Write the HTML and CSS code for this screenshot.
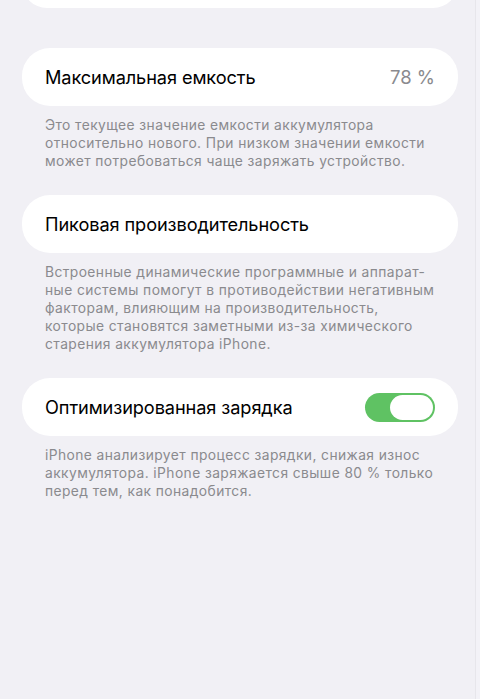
FILE: index.html
```html
<!DOCTYPE html>
<html lang="ru">
<head>
<meta charset="utf-8">
<link rel="stylesheet" href="styles.css">
</head>
<body>
<div class="screen">
  <main class="content">
    <div class="card card-cut"></div>

    <section class="group">
      <div class="card row">
        <span class="label">Максимальная емкость</span>
        <span class="value">78 %</span>
      </div>
      <p class="footer">Это текущее значение емкости аккумулятора относительно нового. При низком значении емкости может потребоваться чаще заряжать устройство.</p>
    </section>

    <section class="group">
      <div class="card row">
        <span class="label">Пиковая производительность</span>
      </div>
      <p class="footer">Встроенные динамические программные и аппарат-<br>ные системы помогут в противодействии негативным факторам, влияющим на производительность, которые становятся заметными из-за химического старения аккумулятора iPhone.</p>
    </section>

    <section class="group">
      <div class="card row">
        <span class="label">Оптимизированная зарядка</span>
        <span class="toggle on"><span class="knob"></span></span>
      </div>
      <p class="footer">iPhone анализирует процесс зарядки, снижая износ аккумулятора. iPhone заряжается свыше 80 % только перед тем, как понадобится.</p>
    </section>
  </main>
  <div class="edge"></div>
</div>
</body>
</html>
```

FILE: styles.css
```css
* { box-sizing: border-box; }
html, body {
  margin: 0;
  padding: 0;
  height: 100%;
  background: #f1f0f5;
  font-family: "Inter", "Roboto", "Noto Sans", sans-serif;
  -webkit-font-smoothing: antialiased;
}
.screen {
  display: flex;
  height: 699px;
  overflow: hidden;
}
.content {
  flex: 1;
  padding: 0 17px 0 22px;
}
.edge {
  width: 5px;
  border-left: 1px solid #e7e6eb;
  background: #f3f2f7;
}
.card {
  background: #ffffff;
  border-radius: 28px;
}
.card-cut {
  height: 50px;
  margin-top: -42px;
}
.group {
  margin-top: 40px;
}
.group + .group {
  margin-top: 25px;
}
.row {
  height: 58px;
  display: flex;
  align-items: center;
  justify-content: space-between;
  padding: 0 23px 0 23px;
}
.label {
  font-size: 18.2px;
  color: #000;
  letter-spacing: -0.1px;
}
.value {
  font-size: 18.5px;
  color: #8a8a8e;
}
.footer {
  margin: 10px 0 0 0;
  padding: 0 20px 0 23px;
  font-size: 13.8px;
  line-height: 18px;
  letter-spacing: 0.42px;
  color: #8a8a8e;
}
.toggle {
  width: 70px;
  height: 29px;
  border-radius: 15px;
  background: #cfcfd3;
  padding: 2px;
  display: flex;
}
.toggle.on {
  background: #5fc263;
  justify-content: flex-end;
}
.knob {
  width: 43px;
  height: 25px;
  border-radius: 13px;
  background: #fff;
}
```
